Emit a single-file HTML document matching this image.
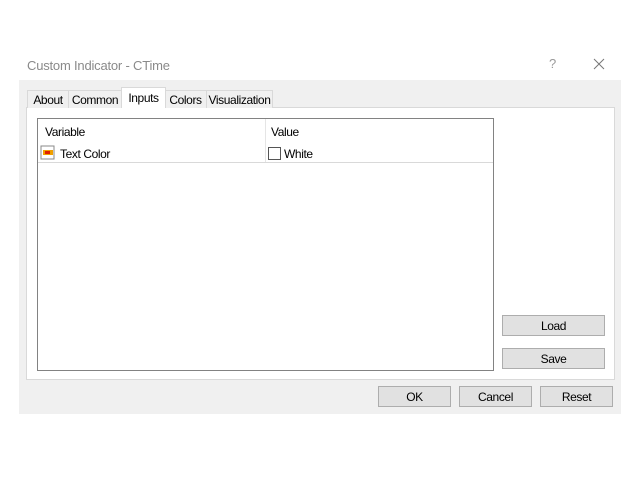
<!DOCTYPE html><html><head><style>
*{margin:0;padding:0;box-sizing:border-box}
body{width:640px;height:480px;background:#fff;position:relative;font-family:"Liberation Sans",sans-serif;font-size:12px;color:#000;overflow:hidden;letter-spacing:-0.4px}
.a{position:absolute}
.title{left:27px;top:58px;font-size:13px;color:#8a8a8a;letter-spacing:-0.2px}
.gray{left:19px;top:80px;width:602px;height:334px;background:#f0f0f0}
.panel{left:26px;top:107px;width:589px;height:273px;background:#fff;border:1px solid #d9d9d9}
.tab{top:90px;height:18px;border:1px solid #d9d9d9;border-bottom:none;background:#f0f0f0;text-align:center;line-height:18px}
.tab.on{top:87px;height:21px;background:#fff;line-height:20px}
.list{left:37px;top:118px;width:457px;height:253px;border:1px solid #828282;background:#fff}
.btn{background:#e1e1e1;border:1px solid #adadad;text-align:center;line-height:20px}
</style></head><body>
<div class="a title">Custom Indicator - CTime</div>
<div class="a" style="left:549px;top:56px;color:#999;font-size:13px">?</div>
<svg class="a" style="left:593px;top:58px" width="12" height="12"><path d="M1 1L11 11M11 1L1 11" stroke="#777" stroke-width="1"/></svg>
<div class="a gray"></div>
<div class="a panel"></div>
<div class="a tab" style="left:27px;width:42px">About</div>
<div class="a tab" style="left:68px;width:54px">Common</div>
<div class="a tab" style="left:164px;width:43px">Colors</div>
<div class="a tab" style="left:206px;width:67px">Visualization</div>
<div class="a tab on" style="left:121px;width:45px">Inputs</div>
<div class="a list">
<div class="a" style="left:7px;top:6px">Variable</div>
<div class="a" style="left:233px;top:6px">Value</div>
<div class="a" style="left:227px;top:0;width:1px;height:43px;background:#e5e5e5"></div>
<div class="a" style="left:0;top:43px;width:455px;height:1px;background:#d9d9d9"></div>
<svg class="a" style="left:2px;top:26px" width="16" height="16"><rect x="1" y="1" width="13" height="13" fill="#fff" stroke="#888"/><rect x="3" y="5" width="10" height="5" fill="#f0a000"/><rect x="5" y="6" width="5" height="3" fill="#e02000"/></svg>
<div class="a" style="left:22px;top:28px">Text Color</div>
<div class="a" style="left:230px;top:28px;width:13px;height:13px;border:1px solid #555"></div>
<div class="a" style="left:246px;top:28px">White</div>
</div>
<div class="a btn" style="left:502px;top:315px;width:103px;height:21px">Load</div>
<div class="a btn" style="left:502px;top:348px;width:103px;height:21px">Save</div>
<div class="a btn" style="left:378px;top:386px;width:73px;height:21px">OK</div>
<div class="a btn" style="left:459px;top:386px;width:73px;height:21px">Cancel</div>
<div class="a btn" style="left:540px;top:386px;width:73px;height:21px">Reset</div>
</body></html>
